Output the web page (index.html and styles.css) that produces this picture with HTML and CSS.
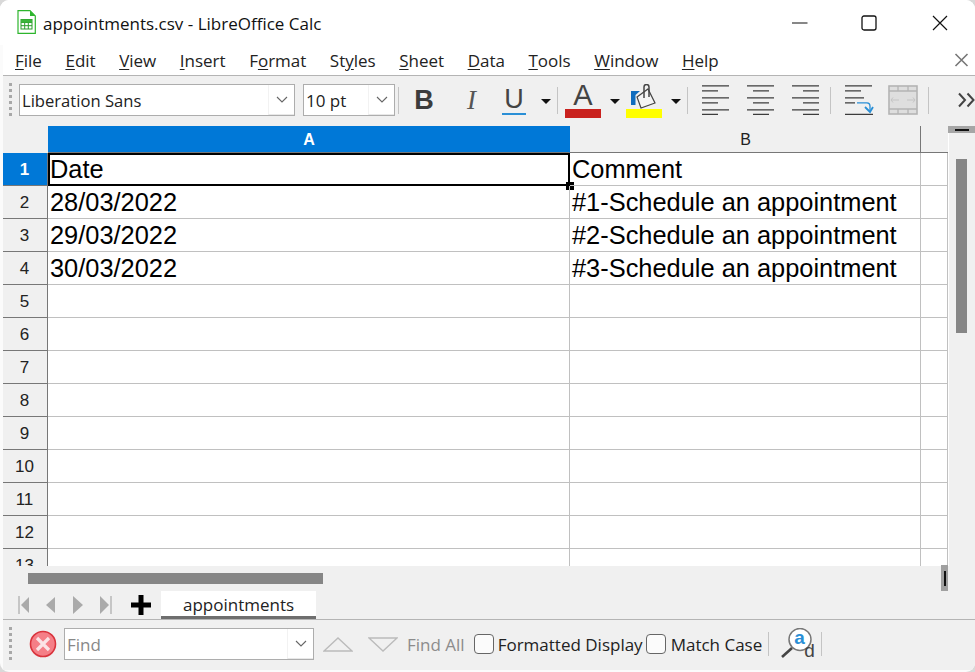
FILE: index.html
```html
<!DOCTYPE html>
<html lang="en">
<head>
<meta charset="utf-8">
<title>appointments.csv - LibreOffice Calc</title>
<link rel="stylesheet" href="styles.css">
</head>
<body>
<div class="window">
  <header class="titlebar">
    <svg class="app-icon" width="19" height="24" viewBox="0 0 19 24"><path d="M1 .7H13L18.300 6V23.300H1Z" fill="#fff" stroke="#2db52d" stroke-width="1.200"/><path d="M13 .7L18.300 6H13Z" fill="#2db52d"/><rect x="4" y="9.500" width="11" height="9.500" fill="#fff" stroke="#2a9d2a"/><path d="M4 12.500H15M4 15.700H15M7.700 9.500V19M11.300 9.500V19" stroke="#2a9d2a" fill="none"/><rect x="4" y="9.500" width="11" height="3" fill="#3cb53c"/></svg>
    <span class="title-text">appointments.csv - LibreOffice Calc</span>
    <div class="win-controls">
      <svg class="win-min" width="16" height="2" viewBox="0 0 16 2"><path d="M0 1H15.500" stroke="#111" stroke-width="1.100"/></svg>
      <svg class="win-max" width="16" height="16" viewBox="0 0 16 16"><rect x="1" y="1" width="14" height="14" rx="2" fill="none" stroke="#111" stroke-width="1.300"/></svg>
      <svg class="win-close" width="16" height="16" viewBox="0 0 16 16"><path d="M1 1L15 15M15 1L1 15" stroke="#111" stroke-width="1.200"/></svg>
    </div>
  </header>

  <nav class="menubar">
    <span><u>F</u>ile</span><span><u>E</u>dit</span><span><u>V</u>iew</span><span><u>I</u>nsert</span><span>F<u>o</u>rmat</span><span>St<u>y</u>les</span><span><u>S</u>heet</span><span><u>D</u>ata</span><span><u>T</u>ools</span><span><u>W</u>indow</span><span><u>H</u>elp</span>
    <svg class="doc-close" width="15" height="14" viewBox="0 0 15 14"><path d="M1.500 1L13.500 13M13.500 1L1.500 13" stroke="#777" stroke-width="1.600"/></svg>
  </nav>

  <div class="toolbar">
    <span class="grip"></span>
    <div class="combo font-combo"><span class="combo-text font-text">Liberation Sans</span><span class="combo-btn"><svg width="12" height="7" viewBox="0 0 12 7"><path d="M1 1L6 6L11 1" fill="none" stroke="#666" stroke-width="1.100"/></svg></span></div>
    <div class="combo size-combo"><span class="combo-text">10 pt</span><span class="combo-btn"><svg width="12" height="7" viewBox="0 0 12 7"><path d="M1 1L6 6L11 1" fill="none" stroke="#666" stroke-width="1.100"/></svg></span></div>
    <span class="sep sep-a"></span>
    <span class="tool-glyph glyph-b">B</span>
    <span class="tool-glyph glyph-i">I</span>
    <span class="tool-glyph glyph-u">U</span>
    <svg class="caret caret-u" width="10" height="5" viewBox="0 0 10 5"><path d="M0 0H10L5 5Z" fill="#111"/></svg>
    <span class="sep sep-b"></span>
    <span class="color-tool"><span class="glyph-a">A</span><span class="bar bar-red"></span></span>
    <svg class="caret caret-a" width="10" height="5" viewBox="0 0 10 5"><path d="M0 0H10L5 5Z" fill="#111"/></svg>
    <span class="color-tool paint-tool">
      <svg class="paint-icon" width="26" height="25" viewBox="0 0 26 25"><path d="M0 21V7H9L4.500 11V21Z" fill="#0f6cbd"/><path d="M6 13L17 5L24 19L10 24Z" fill="#f4f4f4" stroke="#444" stroke-width="1.200"/><path d="M13 14V3A2.500 2.500 0 0 1 18 3V13" fill="none" stroke="#444" stroke-width="1.500"/></svg>
      <span class="bar bar-yellow"></span>
    </span>
    <svg class="caret caret-p" width="10" height="5" viewBox="0 0 10 5"><path d="M0 0H10L5 5Z" fill="#111"/></svg>
    <span class="sep sep-c"></span>
    <svg class="align al-left" width="28" height="30" viewBox="0 0 28 30"><path d="M0 .8H27M0 5.800H16M0 12.800H27M0 17.800H16M0 24.800H27M0 29.300H16" stroke="#3c3c3c" stroke-width="1.300"/></svg>
    <svg class="align al-center" width="28" height="30" viewBox="0 0 28 30"><path d="M0 .8H27M6 5.800H22M0 12.800H27M6 17.800H22M0 24.800H27M6 29.300H22" stroke="#3c3c3c" stroke-width="1.300"/></svg>
    <svg class="align al-right" width="28" height="30" viewBox="0 0 28 30"><path d="M0 .8H27M11 5.800H27M0 12.800H27M11 17.800H27M0 24.800H27M11 29.300H27" stroke="#3c3c3c" stroke-width="1.300"/></svg>
    <span class="sep sep-d"></span>
    <svg class="wrap-icon" width="29" height="30" viewBox="0 0 29 30"><path d="M0 .8H27M0 5.800H16M0 12.800H19M0 17.800H10M0 29.300H28" stroke="#3c3c3c" stroke-width="1.300"/><path d="M12 17.800H22Q25 17.800 25 21V26" fill="none" stroke="#2a8fd6" stroke-width="1.300"/><path d="M20 22L25 27L28 22" fill="none" stroke="#2a8fd6" stroke-width="1.800"/></svg>
    <svg class="merge-icon" width="30" height="30" viewBox="0 0 30 30"><rect x="1" y="1" width="28" height="28" fill="#dedede" stroke="#b4b4b4" stroke-width="1.600"/><path d="M1 6H29M1 24H29M10 1V6M20 1V6M10 24V29M20 24V29" stroke="#b4b4b4" stroke-width="1.300"/><path d="M3 15H11M19 15H27M5 12.500L3 15L5 17.500M25 12.500L27 15L25 17.500" fill="none" stroke="#c4c4c4" stroke-width="1"/></svg>
    <span class="sep sep-e"></span>
    <svg class="more-icon" width="17" height="16" viewBox="0 0 17 16"><path d="M1 1.500L7 8L1 14.500M9.500 1.500L15.500 8L9.500 14.500" fill="none" stroke="#444" stroke-width="2"/></svg>
  </div>

  <div class="sheet">
    <div class="grid">
      <div class="corner"></div><div class="col-head col-active">A</div><div class="col-head">B</div><div class="col-rest"></div>

      <div class="row-head row-active">1</div><div class="cell cell-selected">Date<span class="fill-handle"></span></div><div class="cell">Comment</div><div class="cell"></div>
      <div class="row-head">2</div><div class="cell">28/03/2022</div><div class="cell">#1-Schedule an appointment</div><div class="cell"></div>
      <div class="row-head">3</div><div class="cell">29/03/2022</div><div class="cell">#2-Schedule an appointment</div><div class="cell"></div>
      <div class="row-head">4</div><div class="cell">30/03/2022</div><div class="cell">#3-Schedule an appointment</div><div class="cell"></div>
      <div class="row-head">5</div><div class="cell"></div><div class="cell"></div><div class="cell"></div>
      <div class="row-head">6</div><div class="cell"></div><div class="cell"></div><div class="cell"></div>
      <div class="row-head">7</div><div class="cell"></div><div class="cell"></div><div class="cell"></div>
      <div class="row-head">8</div><div class="cell"></div><div class="cell"></div><div class="cell"></div>
      <div class="row-head">9</div><div class="cell"></div><div class="cell"></div><div class="cell"></div>
      <div class="row-head">10</div><div class="cell"></div><div class="cell"></div><div class="cell"></div>
      <div class="row-head">11</div><div class="cell"></div><div class="cell"></div><div class="cell"></div>
      <div class="row-head">12</div><div class="cell"></div><div class="cell"></div><div class="cell"></div>
      <div class="row-head">13</div><div class="cell"></div><div class="cell"></div><div class="cell"></div>
    </div>
    <div class="vscroll">
      <div class="vscroll-btn"><span class="dash"></span></div>
      <div class="vscroll-track"><div class="vscroll-thumb"></div></div>
    </div>
  </div>

  <div class="hscroll">
    <div class="hscroll-thumb"></div>
    <div class="hscroll-split"><span class="split-line"></span></div>
  </div>

  <div class="tabbar">
    <svg class="tab-nav" width="12" height="18" viewBox="0 0 12 18"><path d="M1 0V18" stroke="#aaa" stroke-width="1.200"/><path d="M3 9L11 1V17Z" fill="#aaa"/></svg>
    <svg class="tab-nav nav-prev" width="9" height="18" viewBox="0 0 9 18"><path d="M0 9L9 1V17Z" fill="#aaa"/></svg>
    <svg class="tab-nav nav-next" width="10" height="18" viewBox="0 0 10 18"><path d="M10 9L0 0V18Z" fill="#aaa"/></svg>
    <svg class="tab-nav nav-last" width="12" height="18" viewBox="0 0 12 18"><path d="M11 0V18" stroke="#aaa" stroke-width="1.200"/><path d="M9 9L0 0V18Z" fill="#aaa"/></svg>
    <svg class="tab-add" width="20" height="20" viewBox="0 0 20 20"><path d="M7.500 0H12.500V7.500H20V12.500H12.500V20H7.500V12.500H0V7.500H7.500Z" fill="#000"/></svg>
    <div class="tab">appointments</div>
  </div>

  <div class="findbar">
    <span class="grip"></span>
    <svg class="find-close" width="28" height="28" viewBox="0 0 28 28"><circle cx="14" cy="14" r="12.500" fill="#f57f87" stroke="#d9343d" stroke-width="1.600"/><path d="M8 8L20 20M20 8L8 20" stroke="#fbe4e6" stroke-width="3.200"/></svg>
    <div class="combo find-combo"><span class="combo-text find-text">Find</span><span class="combo-btn"><svg width="12" height="7" viewBox="0 0 12 7"><path d="M1 1L6 6L11 1" fill="none" stroke="#666" stroke-width="1.100"/></svg></span></div>
    <svg class="find-up" width="30" height="15" viewBox="0 0 30 15"><path d="M1 14H29L15 1Z" fill="none" stroke="#bbb" stroke-width="1.400"/></svg>
    <svg class="find-down" width="30" height="15" viewBox="0 0 30 15"><path d="M1 1H29L15 14Z" fill="none" stroke="#bbb" stroke-width="1.400"/></svg>
    <span class="find-all">Find All</span>
    <span class="check check-first"></span>
    <span class="check-label">Formatted Display</span>
    <span class="check check-second"></span>
    <span class="check-label label-match">Match Case</span>
    <span class="sep sep-f"></span>
    <span class="find-special">
      <svg class="find-lens" width="34" height="32" viewBox="0 0 34 32"><circle cx="19" cy="11.500" r="11" fill="#fff" stroke="#777" stroke-width="1.500"/><path d="M11 20L1 29" stroke="#444" stroke-width="2.600"/></svg>
      <span class="letter-a">a</span><span class="letter-d">d</span>
    </span>
    <span class="sep sep-g"></span>
  </div>
</div>
</body>
</html>
```
FILE: styles.css
```css
* { box-sizing: border-box; }
html, body { margin: 0; padding: 0; width: 975px; height: 672px; overflow: hidden; background: #d9d9d9; }
body { font-family: "Open Sans", "Noto Sans", sans-serif; color: #1a1a1a; }

.window {
  width: 975px; height: 672px; background: #fbfbfb;
  border-radius: 9px; overflow: hidden;
  padding: 0 0 2px 3px;
  display: flex; flex-direction: column;
}

/* title bar */
.titlebar { height: 45px; display: flex; align-items: center; background: #fff; flex: none; margin-left: -3px; padding-left: 17px; }
.app-icon { flex: none; margin-bottom: 2px; }
.title-text { font-size: 17px; margin-left: 7px; margin-top: 3px; line-height: 22px; color: #111; }
.win-controls { margin-left: auto; display: flex; align-items: center; }
.win-min { margin-right: 53px; }
.win-max { margin-right: 55px; }
.win-close { margin-right: 27px; }

/* menu */
.menubar { height: 31px; background: #fff; flex: none; display: flex; align-items: center; gap: 23.500px; padding-left: 12px; font-size: 17px; color: #222; border-bottom: 1px solid #b4b4b4; }
.menubar u { text-underline-offset: 2px; }
.doc-close { margin-left: auto; margin-right: 6px; }

/* toolbar */
.toolbar { height: 50px; background: #f0f0f0; flex: none; display: flex; align-items: center; padding: 0 0 2px 6px; overflow: hidden; }
.grip { width: 3px; height: 34px; flex: none; background: repeating-linear-gradient(to bottom, #a8a8a8 0 3px, transparent 3px 6px); }
.combo { height: 32px; background: #fff; border: 1px solid #adadad; display: flex; align-items: center; flex: none; }
.combo-text { flex: 1; padding-left: 2px; font-size: 17px; color: #222; white-space: nowrap; }
.font-text { font-size: 16.600px; }
.combo-btn { width: 26px; height: 30px; display: flex; align-items: center; justify-content: center; border-left: 1px solid #f2f2f2; border-bottom: 1px solid #e8e8e8; flex: none; }
.font-combo { width: 276px; margin-left: 7px; }
.size-combo { width: 92px; margin-left: 8px; }
.sep { width: 1px; flex: none; height: 27px; background: #c4c4c4; }
.sep-a { margin-left: 3px; }
.tool-glyph { flex: none; color: #3c3c3c; line-height: 30px; text-align: center; }
.glyph-b { font: bold 27px "Liberation Sans", sans-serif; margin-left: 15px; width: 20px; }
.glyph-i { font: italic 27px "Liberation Serif", serif; margin-left: 31px; width: 13px; color: #555; }
.glyph-u { font: 27px "Liberation Sans", sans-serif; margin-left: 24px; width: 24px; border-bottom: 2px solid #2a8fd6; height: 30px; line-height: 28px; color: #444; }
.caret { flex: none; }
.caret-u { margin-left: 15px; margin-top: 3px; }
.sep-b { margin-left: 6px; }
.color-tool { width: 36px; height: 36px; margin-left: 7px; flex: none; display: flex; flex-direction: column; align-items: center; justify-content: flex-end; }
.glyph-a { font: 29px/27px "Liberation Sans", sans-serif; color: #444; }
.bar { display: block; width: 36px; height: 9px; flex: none; }
.bar-red { background: #c9211e; }
.bar-yellow { background: #ffff00; }
.caret-a { margin-left: 9px; margin-top: 3px; }
.color-tool.paint-tool { margin-left: 6px; }
.paint-icon { flex: none; }
.caret-p { margin-left: 9px; margin-top: 3px; }
.sep-c { margin-left: 6px; }
.align { flex: none; }
.al-left { margin-left: 14px; }
.al-center { margin-left: 17px; }
.al-right { margin-left: 17px; }
.sep-d { margin-left: 10px; }
.wrap-icon { margin-left: 14px; flex: none; }
.merge-icon { margin-left: 14px; flex: none; }
.sep-e { margin-left: 10px; }
.more-icon { margin-left: 29px; flex: none; }

/* sheet */
.sheet { height: 440px; flex: none; display: flex; background: #fff; }
.grid { width: 945px; height: 440px; overflow: hidden; display: grid; grid-template-columns: 45px 522px 351px 27px; grid-auto-rows: 33px; grid-template-rows: 27px; background: #fff; font-family: "Liberation Sans", sans-serif; }
.corner { background: #f0f0f0; }
.col-head { background: #f0f0f0; border-bottom: 1px solid #777; border-right: 1px solid #777; font-size: 16px; color: #222; text-align: center; line-height: 27px; padding-left: 1px; }
.col-active { background: #0078d7; border-color: #0078d7; color: #fff; font-weight: bold; border-bottom-color: #777; }
.col-rest { background: #f0f0f0; border-bottom: 1px solid #777; }
.row-head { background: #f0f0f0; border-bottom: 1px solid #777; border-right: 1px solid #777; font-size: 17px; color: #222; text-align: center; line-height: 33px; padding-right: 1px; }
.row-active { background: #0078d7; color: #fff; font-weight: bold; }
.cell { position: relative; border-bottom: 1px solid #c0c0c0; border-right: 1px solid #c0c0c0; font-size: 25.400px; line-height: 33px; padding-left: 2px; color: #000; white-space: nowrap; }
.cell-selected { border: 2px solid #000; line-height: 29px; padding-left: 0; }
.fill-handle { position: absolute; right: -6px; bottom: -6px; width: 8px; height: 8px; background: #000; }

.vscroll { width: 27px; flex: none; background: #f0f0f0; display: flex; flex-direction: column; }
.vscroll-btn { height: 7px; background: #a6a6a6; display: flex; align-items: center; justify-content: center; flex: none; }
.dash { width: 14px; height: 2px; background: #111; }
.vscroll-track { flex: 1; border-left: 1px solid #fff; padding-left: 7px; padding-top: 26px; }
.vscroll-thumb { width: 11px; height: 174px; background: #868686; }

.hscroll { height: 25px; flex: none; background: #f0f0f0; position: relative; }
.hscroll-thumb { position: absolute; left: 25px; top: 7px; width: 295px; height: 11px; background: #868686; }
.hscroll-split { position: absolute; left: 938px; top: -1px; width: 7px; height: 26px; background: #a0a0a0; display: flex; align-items: center; justify-content: center; }
.split-line { width: 2px; height: 15px; background: #111; }

.tabbar { height: 29px; flex: none; background: #f0f0f0; border-bottom: 1px solid #b4b4b4; display: flex; align-items: center; padding-left: 15px; }
.tab-nav { flex: none; }
.nav-prev { margin-left: 16px; }
.nav-next { margin-left: 18px; }
.nav-last { margin-left: 17px; }
.tab-add { margin-left: 19px; flex: none; }
.tab { margin-left: 10px; width: 155px; height: 28px; align-self: flex-start; background: #fff; border-bottom: 3px solid #6e6e6e; font-size: 17px; color: #222; text-align: center; line-height: 27px; }

.findbar { flex: 1; background: #f0f0f0; display: flex; align-items: center; padding: 0 0 2px 6px; }
.find-close { margin-left: 17px; flex: none; }
.find-combo { width: 250px; margin-left: 7px; }
.find-text { color: #888; }
.find-up { margin-left: 9px; flex: none; }
.find-down { margin-left: 15px; flex: none; }
.find-all { margin-left: 9px; font-size: 17px; color: #8c8c8c; white-space: nowrap; }
.check { width: 20px; height: 20px; flex: none; background: #fbfbfb; border: 1px solid #666; border-radius: 4px; }
.check-first { margin-left: 9px; }
.check-second { margin-left: 3px; }
.check-label { margin-left: 4px; font-size: 17px; color: #222; white-space: nowrap; }
.label-match { margin-left: 5px; }
.sep-f { margin-left: 6px; height: 24px; }
.find-special { position: relative; width: 34px; height: 32px; margin-left: 12px; flex: none; font-family: "Liberation Sans", sans-serif; }
.find-lens { display: block; }
.letter-a { position: absolute; left: 13px; top: -1px; font-size: 19px; line-height: 22px; color: #2a8fd6; font-weight: bold; }
.letter-d { position: absolute; left: 23px; top: 13px; font-size: 19px; line-height: 20px; color: #444; }
.sep-g { margin-left: 6px; height: 24px; }
```
